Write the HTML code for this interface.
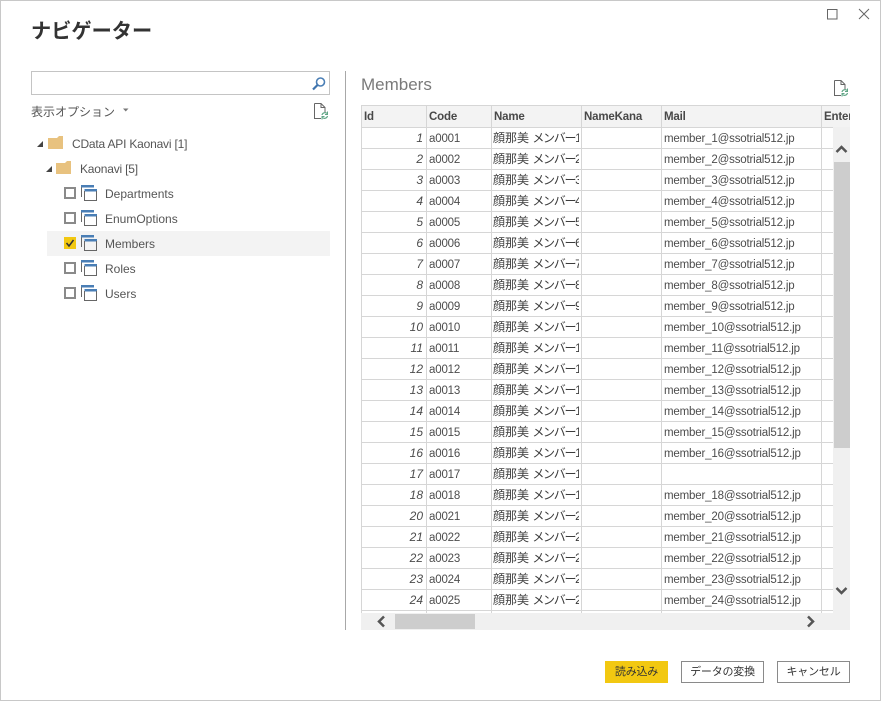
<!DOCTYPE html>
<html><head><meta charset="utf-8">
<style>
html,body{margin:0;padding:0;background:#fff}
body{width:881px;height:701px;position:relative;overflow:hidden;font-family:"Liberation Sans","Noto Sans CJK JP",sans-serif;color:#444}
.a{position:absolute;white-space:nowrap}
.frame{position:absolute;left:0;top:0;width:879px;height:699px;border:1px solid #c8c8c8}
.cb{position:absolute;left:64px;width:8px;height:8px;border:2px solid #8a8a8a;background:#fff}
.tree{font-size:12px;line-height:16px;color:#555}
#grid{position:absolute;left:361px;top:105px;width:489px;height:508px;overflow:hidden}
table{border-collapse:collapse;table-layout:fixed;width:520px;position:absolute;left:0;top:0}
td,th{border:1px solid #d6d6d6;padding:0 2px;font-size:11.5px;letter-spacing:-.17px;font-weight:normal;overflow:hidden;white-space:nowrap;color:#4c4c4c;box-sizing:border-box;text-align:left;line-height:20px}
th{background:#f3f3f3;font-weight:bold;height:22px;color:#484848}
td{height:21px;background:#fff;padding-top:2px;line-height:18px}
td.i{text-align:right;font-style:italic;padding:0 3px 0 2px;line-height:20px;font-size:12px;letter-spacing:0}
td.n{padding:0 0 0 1px;line-height:20px}
td.n div{width:86px;overflow:hidden;font-size:12px;color:#3c3c3c;letter-spacing:0}
td.n s{text-decoration:none;letter-spacing:-1.3px}
.vg{position:absolute;left:833px;top:127px;width:17px;height:486px;background:#f0f0f0}
.hg{position:absolute;left:361px;top:613px;width:489px;height:17px;background:#f0f0f0}
.th{position:absolute;background:#cdcdcd}
.btn{position:absolute;top:661px;height:22px;box-sizing:border-box;font-size:11px;letter-spacing:-.2px;line-height:20px;text-align:center;color:#333;border:1px solid #8a8a8a;background:#fff}
</style></head>
<body>
<div class="frame"></div>

<div class="a" style="left:31px;top:18px;font-size:20.2px;line-height:28px;font-weight:bold;color:#333">ナビゲーター</div>

<svg class="a" style="left:827px;top:9px" width="11" height="11"><rect x=".5" y=".5" width="9.500" height="9.500" fill="none" stroke="#666" stroke-width="1"/></svg>
<svg class="a" style="left:858px;top:8px" width="12" height="12"><path d="M1 1L11 11M11 1L1 11" stroke="#666" stroke-width="1" fill="none"/></svg>

<div class="a" style="left:31px;top:71px;width:297px;height:22px;border:1px solid #c4c4c4"></div>
<svg class="a" style="left:311px;top:76px" width="16" height="16"><circle cx="9.500" cy="6" r="4" fill="none" stroke="#4a7eb5" stroke-width="1.600"/><path d="M6.500 9L2 13.500" stroke="#3f74ad" stroke-width="2.200" fill="none"/></svg>

<div class="a" style="left:31px;top:103px;font-size:12px;line-height:18px;color:#555">表示オプション</div>
<svg class="a" style="left:122px;top:107px" width="8" height="6"><path d="M1 1.500H6.500L3.750 4.500Z" fill="#777"/></svg>

<svg class="a" style="left:314px;top:103px" width="15" height="17"><path d="M.5 .5H7L11 4.500V9M11 4.500H7V.5M.5 .5V15.500H7" fill="none" stroke="#666" stroke-width="1"/><path d="M8 12A3 3 0 0 1 13 10.500M13.500 13A3 3 0 0 1 8.500 14.500" fill="none" stroke="#5fa585" stroke-width="1.200"/><path d="M13.500 8.500V11.500H11M8 16.500V13.500H10.500" fill="none" stroke="#5fa585" stroke-width="1"/></svg>

<!-- tree -->
<svg class="a" style="left:36px;top:140px" width="8" height="8"><path d="M7 1V7H1Z" fill="#444"/></svg>
<svg class="a" style="left:48px;top:135px" width="16" height="16"><path d="M0 3H9L11 1H15V14H0Z" fill="#e8c27f"/></svg>
<div class="a tree" style="left:72px;top:136px;letter-spacing:-.2px">CData API Kaonavi [1]</div>
<svg class="a" style="left:45px;top:165px" width="8" height="8"><path d="M7 1V7H1Z" fill="#444"/></svg>
<svg class="a" style="left:56px;top:160px" width="16" height="16"><path d="M0 3H9L11 1H15V14H0Z" fill="#e8c27f"/></svg>
<div class="a tree" style="left:80px;top:161px;letter-spacing:-.2px">Kaonavi [5]</div>

<div class="a" style="left:47px;top:231px;width:283px;height:25px;background:#f3f3f3"></div>

<div class="cb" style="top:187px"></div>
<div class="cb" style="top:212px"></div>
<div class="a" style="left:64px;top:237px;width:12px;height:12px;background:#f2c811"></div>
<svg class="a" style="left:64px;top:237px" width="12" height="12"><path d="M2.500 6L5 9L9.500 3" fill="none" stroke="#333" stroke-width="1.500"/></svg>
<div class="cb" style="top:262px"></div>
<div class="cb" style="top:287px"></div>

<svg class="a" style="left:81px;top:185px" width="17" height="17"><path d="M.5 12V1" stroke="#666" fill="none"/><path d="M0 0H13V2.500H0Z" fill="#4a7eb5"/><path d="M3.500 4H16V6.500H3.500Z" fill="#4a7eb5"/><path d="M3.500 6V15.500H15.500V6" fill="none" stroke="#666"/></svg>
<svg class="a" style="left:81px;top:210px" width="17" height="17"><path d="M.5 12V1" stroke="#666" fill="none"/><path d="M0 0H13V2.500H0Z" fill="#4a7eb5"/><path d="M3.500 4H16V6.500H3.500Z" fill="#4a7eb5"/><path d="M3.500 6V15.500H15.500V6" fill="none" stroke="#666"/></svg>
<svg class="a" style="left:81px;top:235px" width="17" height="17"><path d="M.5 12V1" stroke="#666" fill="none"/><path d="M0 0H13V2.500H0Z" fill="#4a7eb5"/><path d="M3.500 4H16V6.500H3.500Z" fill="#4a7eb5"/><path d="M3.500 6V15.500H15.500V6" fill="none" stroke="#666"/></svg>
<svg class="a" style="left:81px;top:260px" width="17" height="17"><path d="M.5 12V1" stroke="#666" fill="none"/><path d="M0 0H13V2.500H0Z" fill="#4a7eb5"/><path d="M3.500 4H16V6.500H3.500Z" fill="#4a7eb5"/><path d="M3.500 6V15.500H15.500V6" fill="none" stroke="#666"/></svg>
<svg class="a" style="left:81px;top:285px" width="17" height="17"><path d="M.5 12V1" stroke="#666" fill="none"/><path d="M0 0H13V2.500H0Z" fill="#4a7eb5"/><path d="M3.500 4H16V6.500H3.500Z" fill="#4a7eb5"/><path d="M3.500 6V15.500H15.500V6" fill="none" stroke="#666"/></svg>

<div class="a tree" style="left:105px;top:186px">Departments</div>
<div class="a tree" style="left:105px;top:211px">EnumOptions</div>
<div class="a tree" style="left:105px;top:236px">Members</div>
<div class="a tree" style="left:105px;top:261px">Roles</div>
<div class="a tree" style="left:105px;top:286px">Users</div>

<div class="a" style="left:345px;top:71px;width:1px;height:559px;background:#a8a8a8"></div>

<div class="a" style="left:361px;top:74px;font-size:17px;line-height:22px;color:#7a7a7a">Members</div>
<svg class="a" style="left:834px;top:80px" width="15" height="17"><path d="M.5 .5H7L11 4.500V9M11 4.500H7V.5M.5 .5V15.500H7" fill="none" stroke="#666" stroke-width="1"/><path d="M8 12A3 3 0 0 1 13 10.500M13.500 13A3 3 0 0 1 8.500 14.500" fill="none" stroke="#5fa585" stroke-width="1.200"/><path d="M13.500 8.500V11.500H11M8 16.500V13.500H10.500" fill="none" stroke="#5fa585" stroke-width="1"/></svg>

<div id="grid">
<table>
<colgroup><col style="width:65px"><col style="width:65px"><col style="width:90px"><col style="width:80px"><col style="width:160px"><col style="width:60px"></colgroup>
<tr><th>Id</th><th>Code</th><th>Name</th><th>NameKana</th><th>Mail</th><th>Enter</th></tr>
<tr><td class="i">1</td><td>a0001</td><td class="n"><div>顔那美 <s>メンバー</s>1</div></td><td></td><td>member_1@ssotrial512.jp</td><td></td></tr>
<tr><td class="i">2</td><td>a0002</td><td class="n"><div>顔那美 <s>メンバー</s>2</div></td><td></td><td>member_2@ssotrial512.jp</td><td></td></tr>
<tr><td class="i">3</td><td>a0003</td><td class="n"><div>顔那美 <s>メンバー</s>3</div></td><td></td><td>member_3@ssotrial512.jp</td><td></td></tr>
<tr><td class="i">4</td><td>a0004</td><td class="n"><div>顔那美 <s>メンバー</s>4</div></td><td></td><td>member_4@ssotrial512.jp</td><td></td></tr>
<tr><td class="i">5</td><td>a0005</td><td class="n"><div>顔那美 <s>メンバー</s>5</div></td><td></td><td>member_5@ssotrial512.jp</td><td></td></tr>
<tr><td class="i">6</td><td>a0006</td><td class="n"><div>顔那美 <s>メンバー</s>6</div></td><td></td><td>member_6@ssotrial512.jp</td><td></td></tr>
<tr><td class="i">7</td><td>a0007</td><td class="n"><div>顔那美 <s>メンバー</s>7</div></td><td></td><td>member_7@ssotrial512.jp</td><td></td></tr>
<tr><td class="i">8</td><td>a0008</td><td class="n"><div>顔那美 <s>メンバー</s>8</div></td><td></td><td>member_8@ssotrial512.jp</td><td></td></tr>
<tr><td class="i">9</td><td>a0009</td><td class="n"><div>顔那美 <s>メンバー</s>9</div></td><td></td><td>member_9@ssotrial512.jp</td><td></td></tr>
<tr><td class="i">10</td><td>a0010</td><td class="n"><div>顔那美 <s>メンバー</s>10</div></td><td></td><td>member_10@ssotrial512.jp</td><td></td></tr>
<tr><td class="i">11</td><td>a0011</td><td class="n"><div>顔那美 <s>メンバー</s>11</div></td><td></td><td>member_11@ssotrial512.jp</td><td></td></tr>
<tr><td class="i">12</td><td>a0012</td><td class="n"><div>顔那美 <s>メンバー</s>12</div></td><td></td><td>member_12@ssotrial512.jp</td><td></td></tr>
<tr><td class="i">13</td><td>a0013</td><td class="n"><div>顔那美 <s>メンバー</s>13</div></td><td></td><td>member_13@ssotrial512.jp</td><td></td></tr>
<tr><td class="i">14</td><td>a0014</td><td class="n"><div>顔那美 <s>メンバー</s>14</div></td><td></td><td>member_14@ssotrial512.jp</td><td></td></tr>
<tr><td class="i">15</td><td>a0015</td><td class="n"><div>顔那美 <s>メンバー</s>15</div></td><td></td><td>member_15@ssotrial512.jp</td><td></td></tr>
<tr><td class="i">16</td><td>a0016</td><td class="n"><div>顔那美 <s>メンバー</s>16</div></td><td></td><td>member_16@ssotrial512.jp</td><td></td></tr>
<tr><td class="i">17</td><td>a0017</td><td class="n"><div>顔那美 <s>メンバー</s>17</div></td><td></td><td></td><td></td></tr>
<tr><td class="i">18</td><td>a0018</td><td class="n"><div>顔那美 <s>メンバー</s>18</div></td><td></td><td>member_18@ssotrial512.jp</td><td></td></tr>
<tr><td class="i">20</td><td>a0021</td><td class="n"><div>顔那美 <s>メンバー</s>20</div></td><td></td><td>member_20@ssotrial512.jp</td><td></td></tr>
<tr><td class="i">21</td><td>a0022</td><td class="n"><div>顔那美 <s>メンバー</s>21</div></td><td></td><td>member_21@ssotrial512.jp</td><td></td></tr>
<tr><td class="i">22</td><td>a0023</td><td class="n"><div>顔那美 <s>メンバー</s>22</div></td><td></td><td>member_22@ssotrial512.jp</td><td></td></tr>
<tr><td class="i">23</td><td>a0024</td><td class="n"><div>顔那美 <s>メンバー</s>23</div></td><td></td><td>member_23@ssotrial512.jp</td><td></td></tr>
<tr><td class="i">24</td><td>a0025</td><td class="n"><div>顔那美 <s>メンバー</s>24</div></td><td></td><td>member_24@ssotrial512.jp</td><td></td></tr>
<tr><td class="i"></td><td></td><td></td><td></td><td></td><td></td></tr>
</table>
</div>

<div class="vg"></div>
<div class="th" style="left:834px;top:162px;width:16px;height:286px"></div>
<svg class="a" style="left:835px;top:144px" width="13" height="10"><path d="M1.500 8L6.500 3L11.500 8" fill="none" stroke="#555" stroke-width="2.500"/></svg>
<svg class="a" style="left:835px;top:586px" width="13" height="10"><path d="M1.500 2L6.500 7L11.500 2" fill="none" stroke="#555" stroke-width="2.500"/></svg>

<div class="hg"></div>
<div class="th" style="left:395px;top:614px;width:80px;height:15px"></div>
<svg class="a" style="left:376px;top:615px" width="10" height="13"><path d="M8 1.500L3 6.500L8 11.500" fill="none" stroke="#555" stroke-width="2.500"/></svg>
<svg class="a" style="left:806px;top:615px" width="10" height="13"><path d="M2 1.500L7 6.500L2 11.500" fill="none" stroke="#555" stroke-width="2.500"/></svg>

<div class="btn" style="border:none;background:#f2c811;line-height:22px;left:605px;width:63px">読み込み</div>
<div class="btn" style="left:681px;width:83px">データの変換</div>
<div class="btn" style="left:777px;width:73px">キャンセル</div>
</body></html>
